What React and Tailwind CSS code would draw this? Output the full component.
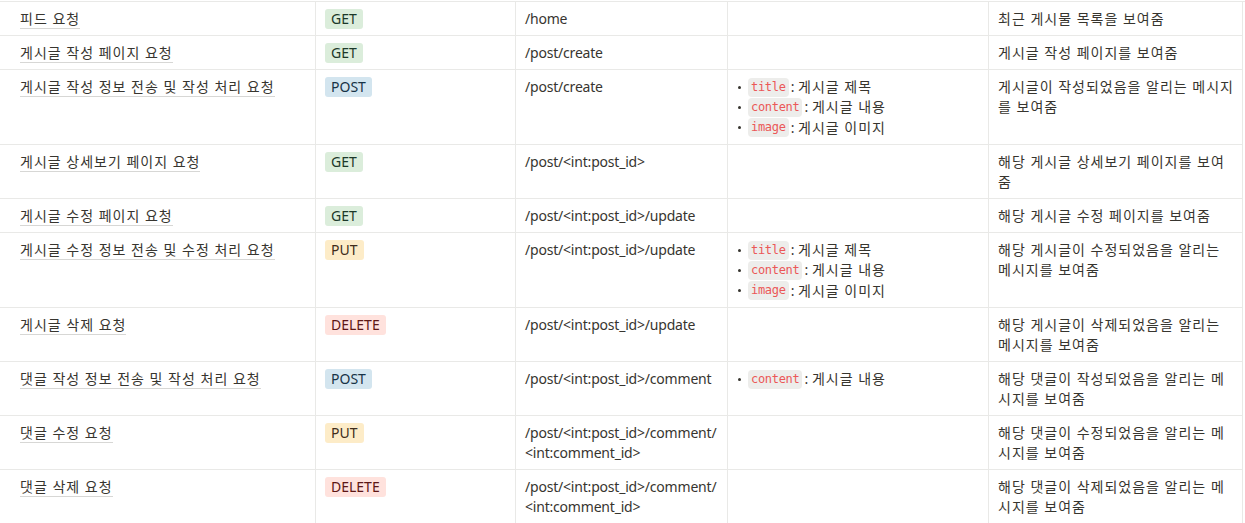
import React from "react";

const badgeStyles = {
  GET: "bg-[rgb(219,237,219)] text-[rgb(28,56,41)]",
  POST: "bg-[rgb(211,229,239)] text-[rgb(24,51,71)]",
  PUT: "bg-[rgb(253,236,200)] text-[rgb(64,44,27)]",
  DELETE: "bg-[rgb(255,226,221)] text-[rgb(93,23,21)]",
};

const rows = [
  { name: "피드 요청", method: "GET", path: ["/home"], params: [], desc: ["최근 게시물 목록을 보여줌"] },
  { name: "게시글 작성 페이지 요청", method: "GET", path: ["/post/create"], params: [], desc: ["게시글 작성 페이지를 보여줌"] },
  {
    name: "게시글 작성 정보 전송 및 작성 처리 요청",
    method: "POST",
    path: ["/post/create"],
    params: [
      ["title", "게시글 제목"],
      ["content", "게시글 내용"],
      ["image", "게시글 이미지"],
    ],
    desc: ["게시글이 작성되었음을 알리는 메시지", "를 보여줌"],
  },
  { name: "게시글 상세보기 페이지 요청", method: "GET", path: ["/post/<int:post_id>"], params: [], desc: ["해당 게시글 상세보기 페이지를 보여", "줌"] },
  { name: "게시글 수정 페이지 요청", method: "GET", path: ["/post/<int:post_id>/update"], params: [], desc: ["해당 게시글 수정 페이지를 보여줌"] },
  {
    name: "게시글 수정 정보 전송 및 수정 처리 요청",
    method: "PUT",
    path: ["/post/<int:post_id>/update"],
    params: [
      ["title", "게시글 제목"],
      ["content", "게시글 내용"],
      ["image", "게시글 이미지"],
    ],
    desc: ["해당 게시글이 수정되었음을 알리는", "메시지를 보여줌"],
  },
  { name: "게시글 삭제 요청", method: "DELETE", path: ["/post/<int:post_id>/update"], params: [], desc: ["해당 게시글이 삭제되었음을 알리는", "메시지를 보여줌"] },
  {
    name: "댓글 작성 정보 전송 및 작성 처리 요청",
    method: "POST",
    path: ["/post/<int:post_id>/comment"],
    params: [["content", "게시글 내용"]],
    desc: ["해당 댓글이 작성되었음을 알리는 메", "시지를 보여줌"],
  },
  { name: "댓글 수정 요청", method: "PUT", path: ["/post/<int:post_id>/comment/", "<int:comment_id>"], params: [], desc: ["해당 댓글이 수정되었음을 알리는 메", "시지를 보여줌"] },
  { name: "댓글 삭제 요청", method: "DELETE", path: ["/post/<int:post_id>/comment/", "<int:comment_id>"], params: [], desc: ["해당 댓글이 삭제되었음을 알리는 메", "시지를 보여줌"] },
];

const cell = "border-b border-r border-[rgb(233,233,231)] pt-[7px] pb-[6px] px-[9px] leading-[20px]";
const line = "h-5 whitespace-nowrap";

export default function App() {
  return (
    <div
      className="w-[1245px] h-[523px] overflow-hidden bg-white text-[14px] text-[#37352f]"
      style={{ fontFamily: '"Noto Sans", "Noto Sans CJK KR", sans-serif' }}
    >
      <div className="mt-px grid grid-cols-[316px_200px_212px_261px_254px] border-t border-[rgb(233,233,231)]">
        {rows.map((r, i) => (
          <React.Fragment key={i}>
            <div className={`${cell} pl-5`}>
              <div className={line}>
                <span className="inline-block h-5 leading-[19px] border-b border-[rgba(55,53,47,0.2)] tracking-[1px] align-top">
                  {r.name}
                </span>
              </div>
            </div>
            <div className={cell}>
              <div className={line}>
                <span className={`inline-flex h-5 items-center rounded-[3px] px-1.5 align-top ${badgeStyles[r.method]}`}>
                  {r.method}
                </span>
              </div>
            </div>
            <div className={`${cell} tracking-[-0.2px]`}>
              {r.path.map((p, j) => (
                <div key={j} className={line}>{p}</div>
              ))}
            </div>
            <div className={`${cell} px-2`}>
              {r.params.map(([k, v], j) => (
                <div key={j} className="flex items-center h-[20.33px] whitespace-nowrap">
                  <span className="ml-[1px] mr-[7px] w-[3px] h-[3px] rounded-full bg-[#37352f] shrink-0" />
                  <span
                    className="rounded-[4px] bg-[rgba(135,131,120,0.15)] text-[#eb5757] px-[3px] text-[12px] leading-[19px] tracking-[-0.3px]"
                    style={{ fontFamily: '"DejaVu Sans Mono", monospace' }}
                  >
                    {k}
                  </span>
                  <span className="ml-[2px]">
                    : <span className="tracking-[1px]">{v}</span>
                  </span>
                </div>
              ))}
            </div>
            <div className={`${cell} tracking-[1px]`}>
              {r.desc.map((d, j) => (
                <div key={j} className={line}>{d}</div>
              ))}
            </div>
          </React.Fragment>
        ))}
      </div>
    </div>
  );
}
